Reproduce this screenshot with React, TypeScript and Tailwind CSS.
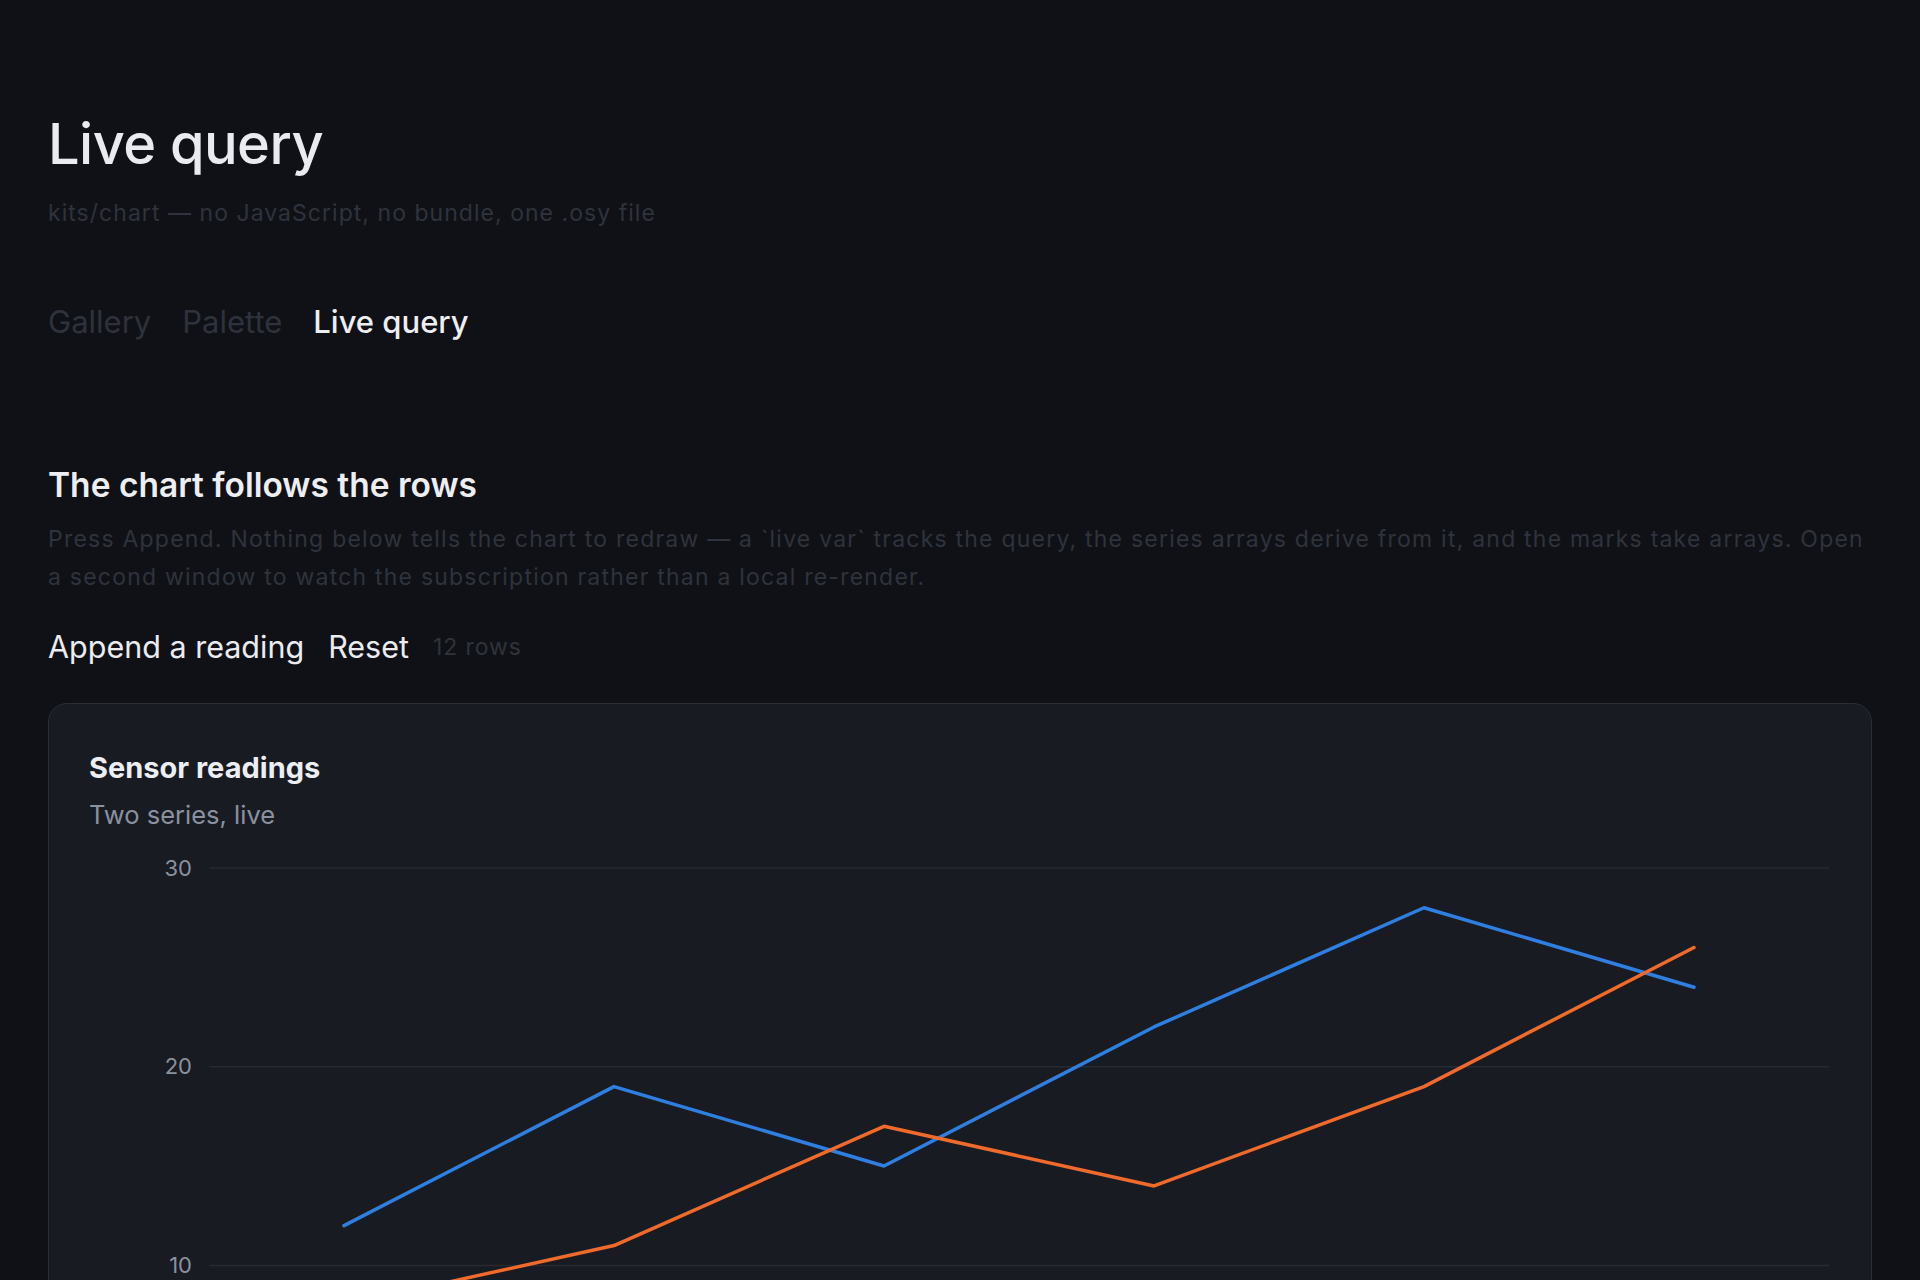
import { useState } from 'react';

type Row = { t: number; series: 'a' | 'b'; value: number };

const SEED: Row[] = [
  { t: 0, series: 'a', value: 12 },
  { t: 0, series: 'b', value: 8 },
  { t: 1, series: 'a', value: 19 },
  { t: 1, series: 'b', value: 11 },
  { t: 2, series: 'a', value: 15 },
  { t: 2, series: 'b', value: 17 },
  { t: 3, series: 'a', value: 22 },
  { t: 3, series: 'b', value: 14 },
  { t: 4, series: 'a', value: 28 },
  { t: 4, series: 'b', value: 19 },
  { t: 5, series: 'a', value: 24 },
  { t: 5, series: 'b', value: 26 },
];

const W = 1740;
const H = 680;
const LEFT = 120;
const TOP = 22;
const PER_UNIT = 19.87;
const TICKS = [30, 20, 10, 0];

const LineChart = ({ rows }: { rows: Row[] }) => {
  const steps = Math.max(...rows.map((r) => r.t)) + 1;
  const band = (W - LEFT) / steps;
  const x = (t: number) => LEFT + band * t + band / 2;
  const y = (v: number) => TOP + (30 - v) * PER_UNIT;

  const path = (s: Row['series']) =>
    rows
      .filter((r) => r.series === s)
      .map((r, i) => `${i === 0 ? 'M' : 'L'}${x(r.t)},${y(r.value)}`)
      .join(' ');

  return (
    <svg width={W} height={H} viewBox={`0 0 ${W} ${H}`} className="block">
      {TICKS.map((tick) => (
        <g key={tick}>
          <line x1={LEFT} x2={W} y1={y(tick)} y2={y(tick)} stroke="#262a33" strokeWidth={1.5} />
          <text
            x={LEFT - 17}
            y={y(tick) + 7.5}
            textAnchor="end"
            fill="#8b919d"
            fontSize={22}
            fontFamily="Inter, sans-serif"
          >
            {tick}
          </text>
        </g>
      ))}
      <path d={path('a')} fill="none" stroke="#2f7fe0" strokeWidth={3.5} strokeLinecap="round" strokeLinejoin="round" />
      <path d={path('b')} fill="none" stroke="#f06a2c" strokeWidth={3.5} strokeLinecap="round" strokeLinejoin="round" />
    </svg>
  );
};

const App = () => {
  const [rows, setRows] = useState<Row[]>(SEED);

  // 새 측정값 추가
  const onAppend = () => {
    const t = Math.max(...rows.map((r) => r.t)) + 1;
    setRows([
      ...rows,
      { t, series: 'a', value: Math.round(10 + Math.random() * 18) },
      { t, series: 'b', value: Math.round(8 + Math.random() * 20) },
    ]);
  };

  const onReset = () => setRows(SEED);

  return (
    <div className="min-h-screen w-full bg-[#101116] px-12 pt-[112px] pb-16 font-['Inter',sans-serif] text-[#eceef2]">
      <h1 className="text-[56px] leading-[64px] font-medium tracking-[-0.01em] text-[#e9ebf0]">Live query</h1>
      <p className="mt-[21px] text-[23px] leading-[32px] tracking-[0.045em] text-[#2e333d]">
        kits/chart — no JavaScript, no bundle, one .osy file
      </p>

      <nav className="mt-[73px] flex gap-[31px] text-[31px] leading-[40px]">
        <a className="text-[#2d323c]">Gallery</a>
        <a className="text-[#2d323c]">Palette</a>
        <a className="font-medium text-[#eceef2]">Live query</a>
      </nav>

      <section className="mt-[123px]">
        <h2 className="text-[33.5px] leading-[40px] font-semibold text-[#eceef2]">The chart follows the rows</h2>
        <p className="mt-[15px] text-[23px] leading-[38px] tracking-[0.053em] text-[#2e333d]">
          Press Append. Nothing below tells the chart to redraw — a `live var` tracks the query, the series arrays
          derive from it, and the marks take arrays. Open a second window to watch the subscription rather than a
          local re-render.
        </p>

        <div className="mt-[31px] flex items-center gap-6">
          <button className="text-[30.5px] leading-[40px] text-[#eaecf0]" onClick={onAppend}>
            Append a reading
          </button>
          <button className="text-[30.5px] leading-[40px] text-[#eaecf0]" onClick={onReset}>
            Reset
          </button>
          <span className="text-[23px] leading-[32px] tracking-[0.04em] text-[#2e333c]">{rows.length} rows</span>
        </div>

        <div className="mt-[36px] rounded-[19px] border border-[#2a2e37] bg-[#181b22] px-10 pt-[46px] pb-10">
          <div className="text-[29px] leading-[36px] font-bold text-[#eceef2]">Sensor readings</div>
          <div className="mt-[13px] text-[25.5px] leading-[32px] text-[#8a91a0]">Two series, live</div>
          <div className="mt-[15px]">
            <LineChart rows={rows} />
          </div>
        </div>
      </section>
    </div>
  );
};

export default App;
